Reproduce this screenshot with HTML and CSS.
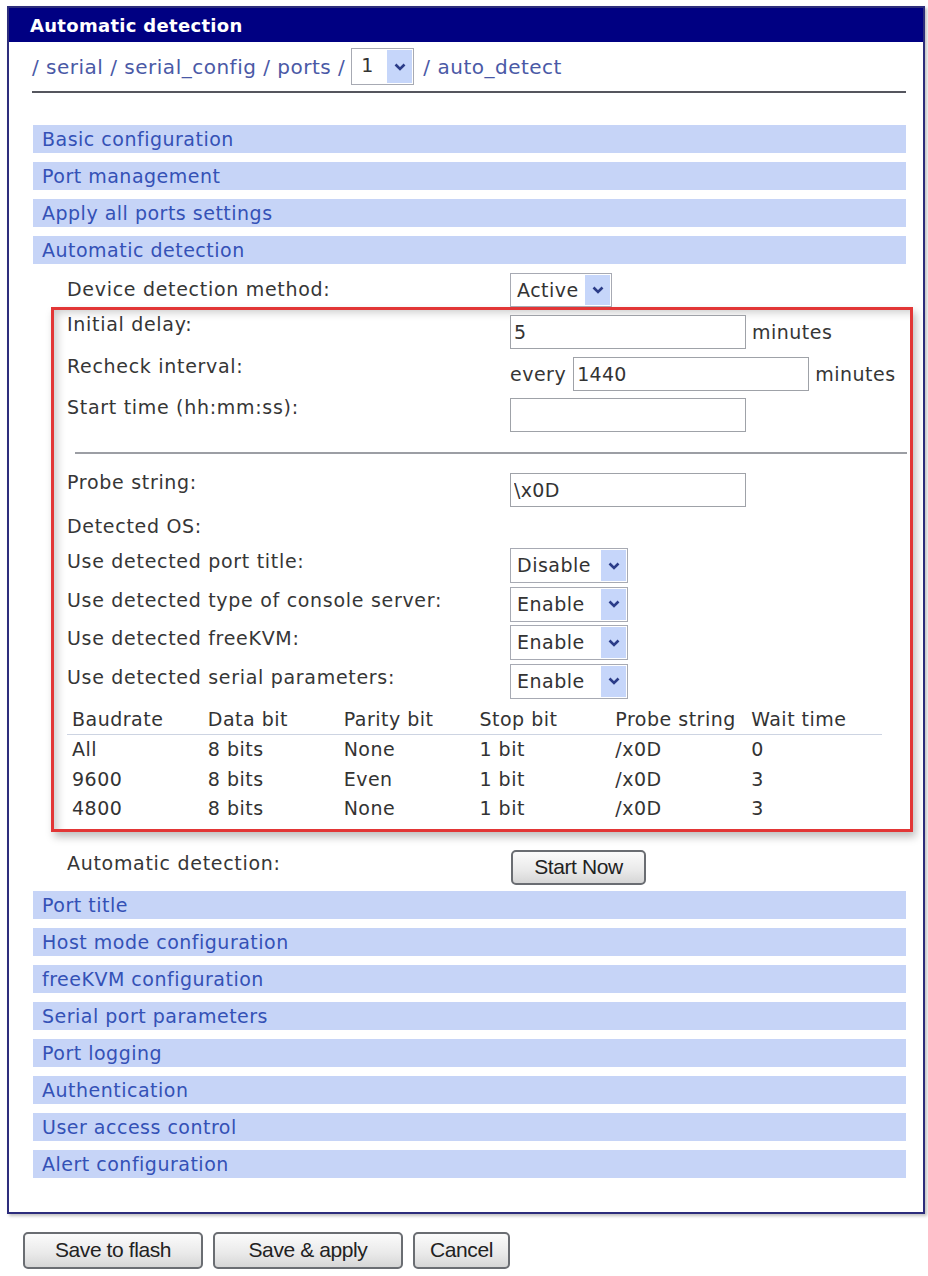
FILE: index.html
```html
<!DOCTYPE html>
<html lang="en">
<head>
    <meta charset="UTF-8">
    <title>Automatic detection</title>
    <link rel="stylesheet" href="styles.css">
</head>
<body>

    <div class="panel">
        <div class="panel-title">Automatic detection</div>

        <div class="panel-body">
            <div class="breadcrumb">
                <span class="crumb">/ serial / serial_config / ports /</span>
                <span class="select select-port">
                    <span class="select-value">1</span>
                    <span class="select-arrow"><svg width="12" height="8" viewBox="0 0 12 8"><path d="M1.5 1.5 L6 6 L10.5 1.5" /></svg></span>
                </span>
                <span class="crumb">/ auto_detect</span>
            </div>

            <div class="bar">Basic configuration</div>
            <div class="bar">Port management</div>
            <div class="bar">Apply all ports settings</div>
            <div class="bar">Automatic detection</div>

            <!-- detection method -->
            <div class="row row-outside">
                <div class="label label-mid">Device detection method:</div>
                <span class="select select-method">
                    <span class="select-value">Active</span>
                    <span class="select-arrow"><svg width="12" height="8" viewBox="0 0 12 8"><path d="M1.5 1.5 L6 6 L10.5 1.5" /></svg></span>
                </span>
            </div>

            <div class="highlight">
                <div class="row row-input">
                    <div class="label">Initial delay:</div>
                    <input class="field" type="text" value="5">
                    <span class="unit">minutes</span>
                </div>
                <div class="row row-input">
                    <div class="label">Recheck interval:</div>
                    <span class="prefix">every</span>
                    <input class="field" type="text" value="1440">
                    <span class="unit">minutes</span>
                </div>
                <div class="row row-input">
                    <div class="label">Start time (hh:mm:ss):</div>
                    <input class="field" type="text" value="">
                </div>

                <div class="divider"></div>

                <div class="row row-input">
                    <div class="label">Probe string:</div>
                    <input class="field" type="text" value="\x0D">
                </div>
                <div class="row row-text">
                    <div class="label">Detected OS:</div>
                </div>
                <div class="row row-select">
                    <div class="label">Use detected port title:</div>
                    <span class="select select-toggle">
                        <span class="select-value">Disable</span>
                        <span class="select-arrow"><svg width="12" height="8" viewBox="0 0 12 8"><path d="M1.5 1.5 L6 6 L10.5 1.5" /></svg></span>
                    </span>
                </div>
                <div class="row row-select">
                    <div class="label">Use detected type of console server:</div>
                    <span class="select select-toggle">
                        <span class="select-value">Enable</span>
                        <span class="select-arrow"><svg width="12" height="8" viewBox="0 0 12 8"><path d="M1.5 1.5 L6 6 L10.5 1.5" /></svg></span>
                    </span>
                </div>
                <div class="row row-select">
                    <div class="label">Use detected freeKVM:</div>
                    <span class="select select-toggle">
                        <span class="select-value">Enable</span>
                        <span class="select-arrow"><svg width="12" height="8" viewBox="0 0 12 8"><path d="M1.5 1.5 L6 6 L10.5 1.5" /></svg></span>
                    </span>
                </div>
                <div class="row row-select">
                    <div class="label">Use detected serial parameters:</div>
                    <span class="select select-toggle">
                        <span class="select-value">Enable</span>
                        <span class="select-arrow"><svg width="12" height="8" viewBox="0 0 12 8"><path d="M1.5 1.5 L6 6 L10.5 1.5" /></svg></span>
                    </span>
                </div>

                <table class="params">
                    <thead>
                        <tr>
                            <th>Baudrate</th>
                            <th>Data bit</th>
                            <th>Parity bit</th>
                            <th>Stop bit</th>
                            <th>Probe string</th>
                            <th>Wait time</th>
                        </tr>
                    </thead>
                    <tbody>
                        <tr><td>All</td><td>8 bits</td><td>None</td><td>1 bit</td><td>/x0D</td><td>0</td></tr>
                        <tr><td>9600</td><td>8 bits</td><td>Even</td><td>1 bit</td><td>/x0D</td><td>3</td></tr>
                        <tr><td>4800</td><td>8 bits</td><td>None</td><td>1 bit</td><td>/x0D</td><td>3</td></tr>
                    </tbody>
                </table>
            </div>

            <div class="row row-outside row-start">
                <div class="label">Automatic detection:</div>
                <button class="btn btn-start">Start Now</button>
            </div>

            <div class="bar">Port title</div>
            <div class="bar">Host mode configuration</div>
            <div class="bar">freeKVM configuration</div>
            <div class="bar">Serial port parameters</div>
            <div class="bar">Port logging</div>
            <div class="bar">Authentication</div>
            <div class="bar">User access control</div>
            <div class="bar">Alert configuration</div>
        </div>
    </div>

    <div class="actions">
        <button class="btn btn-flash">Save to flash</button>
        <button class="btn btn-apply">Save &amp; apply</button>
        <button class="btn btn-cancel">Cancel</button>
    </div>

</body>
</html>
```

FILE: styles.css
```css
body {
    font-family: 'DejaVu Sans', Verdana, sans-serif;
    font-size: 19px;
    letter-spacing: 0.5px;
    margin: 0;
    padding: 0;
    background-color: #fff;
    color: #363636;
}

.panel {
    margin: 6px 0 0 7px;
    width: 914px;
    border: 2px solid #2d2d7c;
    box-shadow: 2px 2px 3px rgba(0, 0, 0, 0.25);
}

.panel-title {
    background-color: #000082;
    color: #fff;
    font-weight: bold;
    font-size: 18px;
    letter-spacing: 0.3px;
    height: 34px;
    line-height: 36px;
    padding-left: 21px;
}

.panel-body {
    padding: 0 17px 25px 24px;
}

.breadcrumb {
    display: flex;
    align-items: center;
    gap: 6px;
    margin-top: 6px;
    height: 37px;
    font-size: 20px;
    color: #4a59a6;
    border-bottom: 2px solid #55565e;
    padding-bottom: 6px;
    margin-bottom: 32px;
    margin-left: -1px;
}

.select-port + .crumb {
    margin-left: 3px;
}

.bar {
    background-color: #c6d4f7;
    color: #3451b6;
    height: 28px;
    line-height: 28px;
    padding-left: 9px;
    margin-bottom: 9px;
}

/* select look-alike */
.select {
    display: inline-flex;
    align-items: stretch;
    background-color: #fff;
    border: 1px solid #a7aab3;
    box-sizing: border-box;
    height: 35px;
    font-size: 19px;
}

.select-value {
    flex-grow: 1;
    padding-left: 6px;
    line-height: 33px;
    color: #333;
}

.select-arrow {
    width: 25px;
    margin: 1px;
    background-color: #c6d6fa;
    display: flex;
    align-items: center;
    justify-content: center;
}

.select-arrow path {
    fill: none;
    stroke: #2b3c88;
    stroke-width: 2.6;
}

.select-port {
    width: 63px;
    height: 37px;
    padding-left: 3px;
}

.select-method {
    width: 102px;
    height: 34px;
}

.select-toggle {
    width: 118px;
}

/* form rows */
.row {
    display: flex;
    align-items: flex-start;
}

.label {
    width: 443px;
    flex-shrink: 0;
    line-height: 23px;
    letter-spacing: 0.7px;
}

.row-outside {
    padding-left: 34px;
}

.label-mid {
    padding-top: 5px;
}

.row-input {
    height: 34px;
    margin-bottom: 7.5px;
}

.row-input .label {
    margin-top: -2px;
}

.field {
    width: 236px;
    height: 34px;
    box-sizing: border-box;
    border: 1px solid #9fa2a8;
    font-family: 'DejaVu Sans', Verdana, sans-serif;
    font-size: 19px;
    letter-spacing: 0.3px;
    color: #333;
    padding: 0 3px;
    margin: 0;
    outline: none;
}

.prefix {
    line-height: 34px;
    margin-right: 7px;
}

.unit {
    line-height: 34px;
    margin-left: 6px;
}

.row-text {
    margin-top: 8px;
    height: 33px;
}

.row-select {
    height: 35px;
    margin-bottom: 3.5px;
}

.row-select .label {
    padding-top: 2px;
}

.highlight {
    margin: 0 -7px 0 18px;
    border: 3px solid #e23636;
    padding: 5px 3px 6px 13px;
    box-shadow: 3px 5px 8px rgba(0, 0, 0, 0.25), inset 10px 9px 10px -7px rgba(0, 0, 0, 0.22);
}

.divider {
    height: 2px;
    background-color: #9c9ea4;
    margin: 19.5px 0 19.5px 8px;
}

.params {
    border-collapse: collapse;
    width: 815px;
    margin-top: 5px;
}

.params th,
.params td {
    text-align: left;
    font-weight: normal;
    padding: 0 0 0 5px;
    color: #333;
}

.params th {
    height: 30px;
    border-bottom: 1px solid #cdd4e2;
    width: 130px;
}

.params td {
    height: 29.5px;
}

.row-start {
    margin-top: 17.5px;
    margin-bottom: 6px;
}

.row-start .label {
    padding-top: 2px;
}

/* buttons */
.btn {
    font-family: 'Liberation Sans', Arial, sans-serif;
    font-size: 21px;
    letter-spacing: -0.4px;
    color: #222;
    background: linear-gradient(#fbfbfb, #e9e9e9 60%, #d6d6d6);
    border: 2px solid #6a6d72;
    border-radius: 5px;
    padding: 0;
    cursor: pointer;
}

.btn-start {
    width: 135px;
    height: 35px;
    margin-left: 1px;
}

.actions {
    display: flex;
    gap: 10px;
    margin: 18px 0 0 23px;
}

.actions .btn {
    height: 37px;
}

.btn-flash {
    width: 180px;
}

.btn-apply {
    width: 190px;
}

.btn-cancel {
    width: 97px;
}
```
